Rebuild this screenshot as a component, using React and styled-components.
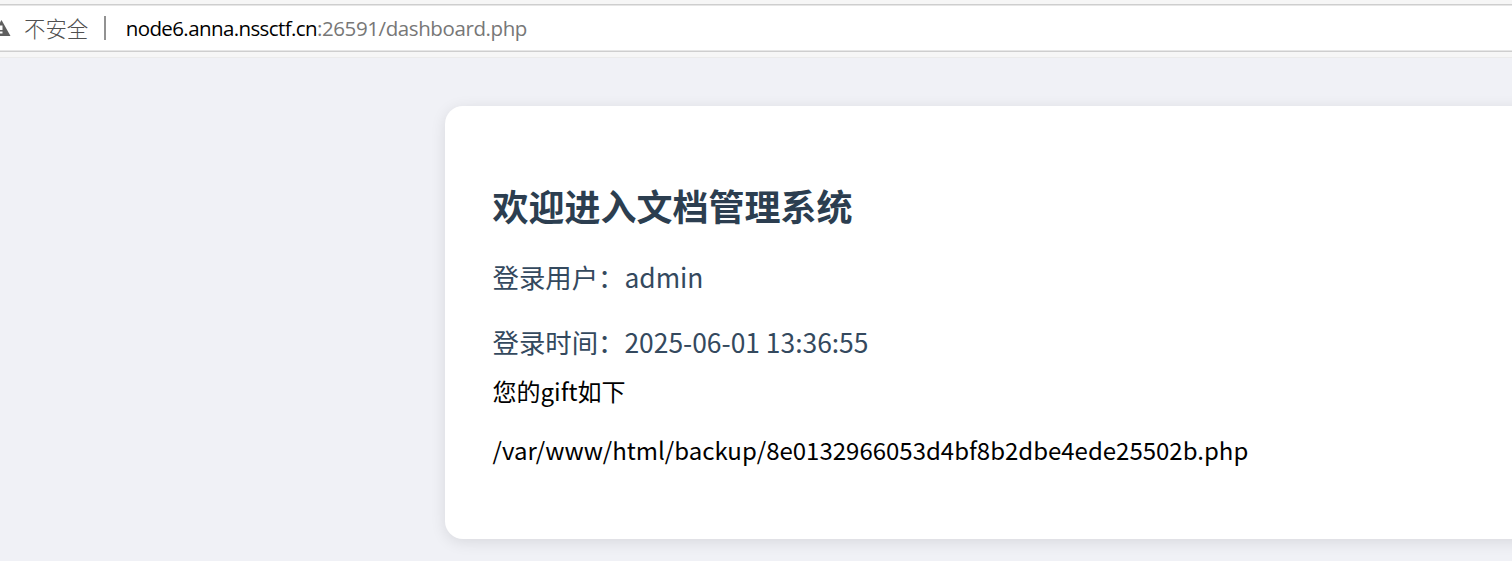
import React from "react";
import styled, { createGlobalStyle } from "styled-components";

const Global = createGlobalStyle`
  * { box-sizing: border-box; }
  body { margin: 0; background: #f0f1f6; overflow: hidden; }
`;
const Page = styled.div`
  height: 561px;
  overflow: hidden;
  font-family: "Noto Sans CJK SC", sans-serif;
`;
const Toolbar = styled.header`
  height: 58px;
  padding: 4px 0 5px;
  background: #f6f6f6;
  border-bottom: 1px solid #ebebeb;
`;
const AddressBar = styled.div`
  height: 48px;
  display: flex;
  align-items: center;
  padding-bottom: 1px;
  background: #fff;
  border-top: 1px solid #cecece;
  border-bottom: 1px solid #cecece;
  box-shadow: inset 0 1px #e6e6e6, inset 0 -1px #e6e6e6;
  white-space: nowrap;
`;
const Warning = styled.svg`
  width: 11px;
  height: 16px;
  flex: none;
`;
const Security = styled.span`
  margin-left: 13px;
  font-size: 21.4px;
  font-weight: 300;
  line-height: 30px;
  color: #505050;
`;
const Divider = styled.span`
  width: 2px;
  height: 24px;
  margin: 0 20px 0 15.5px;
  background: #929292;
`;
const Url = styled.span`
  font-family: "Open Sans", sans-serif;
  font-size: 20.5px;
  letter-spacing: -0.4px;
  line-height: 30px;
  color: #777;
`;
const Host = styled.span`
  letter-spacing: -0.6px;
  color: #000;
`;
const Card = styled.main`
  width: 1200px;
  height: 433px;
  margin: 48px 0 0 445px;
  padding: 75px 48px 0 47.5px;
  background: #fff;
  border-radius: 18px;
  box-shadow: 0 3px 15px rgba(0, 0, 0, 0.1);
`;
const Title = styled.h1`
  margin: 0 0 28px;
  font-size: 36px;
  line-height: 48px;
  color: #2c3e50;
`;
const Info = styled.p`
  margin: 0 0 25px;
  font-size: 26.4px;
  line-height: 40px;
  color: #34495e;
`;
const Gift = styled.div`
  margin-top: -14px;
  font-size: 24px;
  line-height: 36px;
  color: #000;
`;
const GiftPath = styled.p`
  margin: 23px 0 0;
`;

export default function App() {
  return (
    <Page>
      <Global />
      <Toolbar>
        <AddressBar>
          <Warning viewBox="0 0 11 16">
            <path d="M1.5 0 10.5 16H-8Z" fill="#5f5f5f" />
            <path d="M0 5.5H2.5V10H0ZM0 11.5H2.5V13.5H0Z" fill="#fff" />
          </Warning>
          <Security>不安全</Security>
          <Divider />
          <Url><Host>node6.anna.nssctf.cn</Host>:26591/dashboard.php</Url>
        </AddressBar>
      </Toolbar>
      <Card>
        <Title>欢迎进入文档管理系统</Title>
        <Info>登录用户：admin</Info>
        <Info>登录时间：2025-06-01 13:36:55</Info>
        <Gift>
          您的gift如下
          <GiftPath>/var/www/html/backup/8e0132966053d4bf8b2dbe4ede25502b.php</GiftPath>
        </Gift>
      </Card>
    </Page>
  );
}
